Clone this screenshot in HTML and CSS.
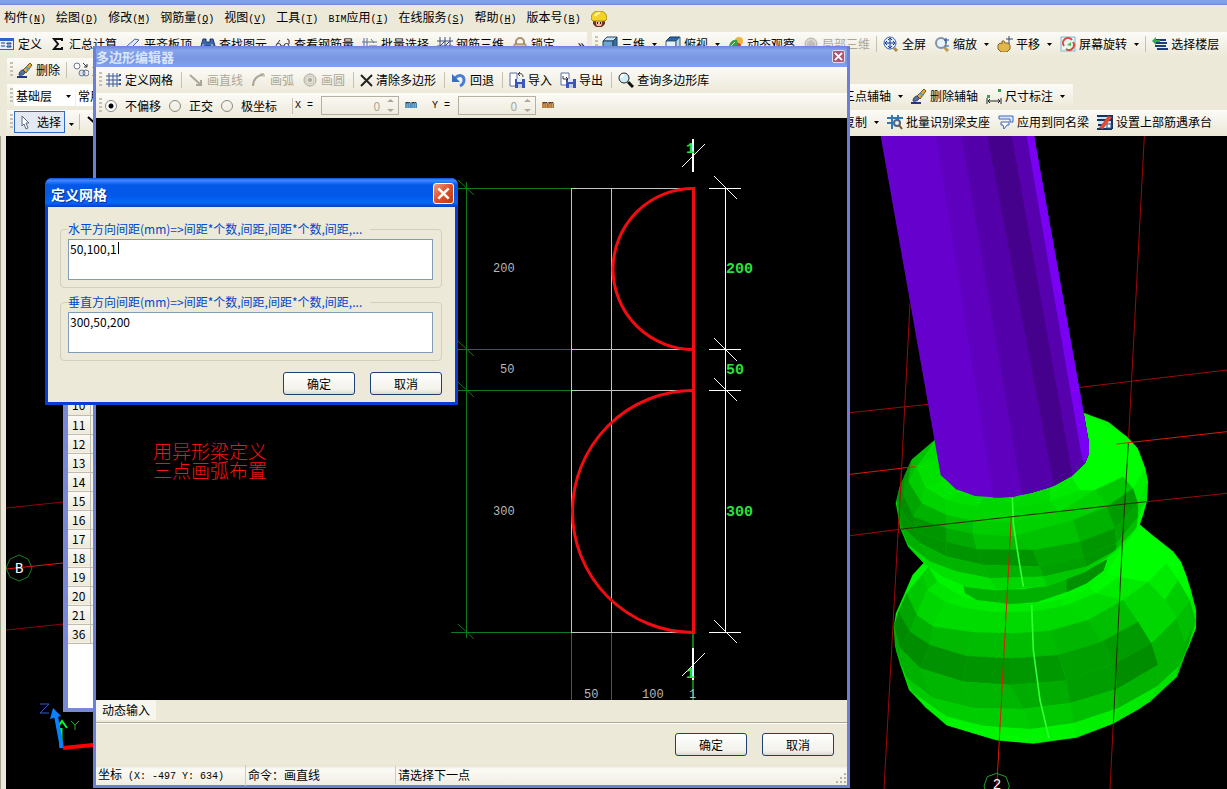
FILE: index.html
```html
<!DOCTYPE html>
<html lang="zh-CN">
<head>
  <meta charset="UTF-8" />
  <meta name="viewport" content="width=device-width, initial-scale=1.0"/>
  <title>多边形编辑器</title>
  <link rel="stylesheet" href="styles.css">
</head>
<body>

  <!-- icon sprite -->
  <svg class="sprite" aria-hidden="true">
    <symbol id="i-define" viewBox="0 0 16 16"><rect x="0" y="2" width="15" height="12" fill="#2f62c8"/><rect x="1" y="5" width="13" height="8" fill="#e8f0ff"/><path d="M2 7h4M2 10h4M8 7h4v1h-4zM8 10h4v1h-4z" stroke="#1d3f90" fill="none"/></symbol>
    <symbol id="i-sigma" viewBox="0 0 16 16"><path d="M12 5V3H4l4 5-4 5h8v-2" fill="none" stroke="#111" stroke-width="2"/></symbol>
    <symbol id="i-plane" viewBox="0 0 16 16"><path d="M1 11 10 3l4 1-8 8z" fill="#dfe8f4" stroke="#46659a"/><path d="M2 14h11" stroke="#888"/></symbol>
    <symbol id="i-binoc" viewBox="0 0 16 16"><path d="M3 3h3v3h4V3h3l2 7v4h-5v-4H6v4H1v-4z" fill="#3c68b0" stroke="#1b3768"/><path d="M3 8v3M12 8v3" stroke="#cfe0ff"/></symbol>
    <symbol id="i-glasses" viewBox="0 0 16 16"><path d="M1 10a2 2 0 1 0 5 0 2 2 0 1 0-5 0M9 10a2 2 0 1 0 5 0 2 2 0 1 0-5 0M6 10h3M2 8 5 4M14 8V4l-2-1" fill="none" stroke="#333"/></symbol>
    <symbol id="i-batch" viewBox="0 0 16 16"><path d="M2 2v12M5 2v12M0 6h15M7 10h8M9 3l3 4" fill="none" stroke="#5d6f94"/></symbol>
    <symbol id="i-rebar" viewBox="0 0 16 16"><path d="M3 1v14M8 1v14M13 1v14M0 5h16M0 10h16M3 10 8 5M8 10l5-5" fill="none" stroke="#3e4f80"/></symbol>
    <symbol id="i-lock" viewBox="0 0 16 16"><path d="M4 8V6a4 4 0 0 1 8 0v2" fill="none" stroke="#a89468" stroke-width="2"/><rect x="2" y="8" width="12" height="7" rx="1" fill="#d8c48c" stroke="#8d7b50"/></symbol>
    <symbol id="i-cube" viewBox="0 0 16 16"><path d="M1 5 5 1h10l-4 4z" fill="#cbe2f5" stroke="#1e4468"/><path d="M1 5h10v10H1z" fill="#6fa3d0" stroke="#1e4468"/><path d="m11 5 4-4v10l-4 4z" fill="#3a6d9f" stroke="#1e4468"/></symbol>
    <symbol id="i-cubetop" viewBox="0 0 16 16"><path d="M1 5 5 1h10l-4 4z" fill="#2867ae" stroke="#16365c"/><path d="M1 5h10v10H1z" fill="#e4f0fa" stroke="#3a5f86"/><path d="m11 5 4-4v10l-4 4z" fill="#bcd6ea" stroke="#3a5f86"/></symbol>
    <symbol id="i-orbit" viewBox="0 0 16 16"><circle cx="11" cy="5" r="4" fill="#f0b43a"/><circle cx="10" cy="10" r="3" fill="#cf3a2a"/><path d="M1 12c0-6 4-9 8-8l1 4c-2 4-5 6-9 4z" fill="#2fa244"/><path d="M3 10 7 6" stroke="#bff0bf"/></symbol>
    <symbol id="i-partial" viewBox="0 0 16 16"><circle cx="8" cy="8" r="6" fill="#d9d7cc" stroke="#b4b2a5"/><path d="m4 7 4-3 4 3v4l-4 2-4-2z" fill="#c1bfb4"/></symbol>
    <symbol id="i-full" viewBox="0 0 16 16"><path d="m11 12 3 3" stroke="#b08a40" stroke-width="3"/><circle cx="7" cy="7" r="6" fill="#dfeaff" stroke="#3a5eae"/><path d="M7 2v10M2 7h10M5 4l2-2 2 2M5 10l2 2 2-2M4 5 2 7l2 2M10 5l2 2-2 2" fill="none" stroke="#1c3c88"/></symbol>
    <symbol id="i-zoom" viewBox="0 0 16 16"><path d="m10 11 4 4" stroke="#c09a50" stroke-width="3"/><circle cx="7" cy="7" r="5" fill="#e9f3fc" stroke="#8292a8" stroke-width="2"/><path d="M10 4h5M12 2v5M11 10h4" stroke="#24509c"/></symbol>
    <symbol id="i-hand" viewBox="0 0 16 16"><path d="M1 9 3 7l2 1V5h2l1 2h3l2 2v4l-3 3H4l-3-3z" fill="#e3b64c" stroke="#8a6520"/><path d="M12 0v8M9 3h7" stroke="#39466c"/></symbol>
    <symbol id="i-rotate" viewBox="0 0 16 16"><rect x="1" y="1" width="14" height="14" fill="#e4f6f0" stroke="#7fb9d8"/><path d="M4 10a5 5 0 0 1 8-6M13 6a5 5 0 0 1-7 7" fill="none" stroke="#e0453a" stroke-width="2"/><path d="m7 9 4-3v4z" fill="#58b858"/></symbol>
    <symbol id="i-floors" viewBox="0 0 16 16"><path d="M3 4h11M4 7h11M3 10h11M5 13h11" stroke="#1e3f76" stroke-width="2"/><path d="M0 5 4 1v3h4v2H4v3z" fill="#38a848"/></symbol>
    <symbol id="i-brush" viewBox="0 0 16 16"><path d="M0 15h10" stroke="#23387c" stroke-width="2"/><path d="m6 8 7-7 2 2-6 8z" fill="#e0a63a" stroke="#7a5420"/><path d="m9 5 3 3" stroke="#4aa0c8" stroke-width="2"/><path d="M2 13c0-3 2-5 4-5l2 2c0 2-3 4-6 3z" fill="#5a6ea8" stroke="#2b3c70"/></symbol>
    <symbol id="i-shapes" viewBox="0 0 16 16"><circle cx="4" cy="4" r="3" fill="#fff" stroke="#6a7a98"/><circle cx="9" cy="11" r="3" fill="#dce4f0" stroke="#6a7a98"/><circle cx="13" cy="11" r="3" fill="none" stroke="#6a7a98"/><path d="m10 1 4 4M14 2v3h-3" fill="none" stroke="#333"/></symbol>
    <symbol id="i-cursor" viewBox="0 0 16 16"><path d="m4 2 7 7H8l2 5-2 1-2-5-2 2z" fill="#fff" stroke="#5a6a88"/></symbol>
    <symbol id="i-line" viewBox="0 0 16 16"><path d="m2 3 11 10M13 8v5H8" fill="none" stroke="currentColor" stroke-width="2"/></symbol>
    <symbol id="i-axis" viewBox="0 0 16 16"><path d="M2 13h12M2 3v10M3 12l9-9" fill="none" stroke="#444"/></symbol>
    <symbol id="i-dim" viewBox="0 0 16 16"><path d="M1 10v6M15 10v6M2 13h12M4 11l-2 2 2 2M12 11l2 2-2 2" fill="none" stroke="#222"/><path d="M1 7h3v3H1zM12 1h3v3h-3z" fill="#3f9a58"/></symbol>
    <symbol id="i-recog" viewBox="0 0 16 16"><path d="M0 4h16M0 9h6M5 1v14M11 1v5" fill="none" stroke="#2f78b8" stroke-width="2"/><circle cx="10" cy="9" r="3" fill="#e4f0fa" stroke="#54657c" stroke-width="2"/><path d="m12 11 3 4" stroke="#8a4a2a" stroke-width="2"/></symbol>
    <symbol id="i-apply" viewBox="0 0 16 16"><path d="M1 2h14v6h-3V5H1z" fill="#dfe9ff" stroke="#3a66b8"/><path d="M3 8h8v3H9l-3 4-1-4H3z" fill="#fff" stroke="#3a66b8"/></symbol>
    <symbol id="i-setbar" viewBox="0 0 16 16"><path d="M1 1h14v14H1z" fill="#cfe2fa"/><path d="M0 2h15M0 6h14M1 11h5M0 15h15M15 1v14" stroke="#16355e" stroke-width="2"/><path d="m2 14 9-12 4 1-9 12z" fill="#e04a34"/><path d="M10 10h4v4h-4z" fill="#fff" stroke="#2a5a9a"/></symbol>
    <symbol id="i-grid" viewBox="0 0 16 16"><path d="M3 1v14M7 1v14M11 1v14M0 4h14M0 8h14M0 12h14" stroke="#3858a0"/><path d="M13 2h2v2h-2zM13 7h2v2h-2zM13 11h2v2h-2z" fill="#3858a0"/></symbol>
    <symbol id="i-arc" viewBox="0 0 16 16"><path d="M2 14C2 8 6 3 13 2M9 2h4v3" fill="none" stroke="currentColor" stroke-width="1"/><path d="M2 14C2 8 6 3 12 3" fill="none" stroke="currentColor" stroke-width="2"/></symbol>
    <symbol id="i-circle" viewBox="0 0 16 16"><circle cx="8" cy="8" r="6" fill="#e4e2d8" stroke="currentColor"/><circle cx="8" cy="8" r="4" fill="none" stroke="#cfccbf"/><circle cx="8" cy="8" r="2" fill="currentColor"/></symbol>
    <symbol id="i-cross" viewBox="0 0 13 16"><path d="m1 3 11 11M12 3 1 14" stroke="#222" stroke-width="2"/></symbol>
    <symbol id="i-undo" viewBox="0 0 16 16"><path d="M4 6c4-4 9-3 9 2 0 3-2 5-4 6" fill="none" stroke="#4a7fd4" stroke-width="3"/><path d="M1 2v8h8z" fill="#3a6cc4"/></symbol>
    <symbol id="i-import" viewBox="0 0 16 16"><path d="M1 1h7v13H1z" fill="#fff" stroke="#5a6fa0"/><path d="M6 7h10v9H6z" fill="#3c56b8"/><path d="M8 7h5v3H8z" fill="#dfe8ff"/><path d="M9 12h4v4H9z" fill="#c8cede"/><path d="M14 5c0-3-2-4-5-3m2-2L9 2l2 2" fill="none" stroke="#333"/></symbol>
    <symbol id="i-export" viewBox="0 0 16 16"><path d="M1 1h8v12H1z" fill="#fff" stroke="#5a6fa0"/><path d="M6 7h10v9H6z" fill="#3c56b8"/><path d="M8 7h5v3H8z" fill="#dfe8ff"/><path d="M9 12h4v4H9z" fill="#c8cede"/><path d="M3 4v3h4M6 5l2 2-2 2" fill="none" stroke="#333"/></symbol>
    <symbol id="i-search" viewBox="0 0 16 16"><path d="m10 10 5 5" stroke="#111" stroke-width="3"/><circle cx="6" cy="6" r="5" fill="#cfeefa" stroke="#222"/><path d="M3 6c0-2 1-3 3-3" fill="none" stroke="#fff" stroke-width="2"/></symbol>
    <symbol id="i-helmet" viewBox="0 0 16 16"><path d="M2 8h12v5l-3 3H5l-3-3z" fill="#6a3428"/><path d="M5 10h6v3l-1 2H6l-1-2z" fill="#f2b99a"/><path d="M6 11h1v2H6zM9 11h1v2H9z" fill="#222"/><path d="M0 8c0-5 3-8 8-8s8 3 8 8l-2 2H2z" fill="#f2d428" stroke="#a88a10"/><path d="M4 5c1-2 3-3 5-3" fill="none" stroke="#fff8a0" stroke-width="2"/></symbol>
    <symbol id="i-down" viewBox="0 0 5 5"><path d="M0 1h5L2.500 4z" fill="currentColor"/></symbol>
    <symbol id="i-close" viewBox="0 0 10 10"><path d="m1 1 8 8M9 1 1 9" stroke="#fff" stroke-width="2"/></symbol>
  </svg>

  <div class="app">
    <div class="app-title"></div>
    <nav class="menubar">
      <button>构件<span class="latin">(<u>N</u>)</span></button>
      <button>绘图<span class="latin">(<u>D</u>)</span></button>
      <button>修改<span class="latin">(<u>M</u>)</span></button>
      <button>钢筋量<span class="latin">(<u>Q</u>)</span></button>
      <button>视图<span class="latin">(<u>V</u>)</span></button>
      <button>工具<span class="latin">(<u>T</u>)</span></button>
      <button><span class="latin">BIM</span>应用<span class="latin">(<u>I</u>)</span></button>
      <button>在线服务<span class="latin">(<u>S</u>)</span></button>
      <button>帮助<span class="latin">(<u>H</u>)</span></button>
      <button>版本号<span class="latin">(<u>B</u>)</span></button>
      <svg class="icon"><use href="#i-helmet"/></svg>
    </nav>

    <div class="bar-row row-main">
      <div class="bar bar-first">
        <button class="tool"><svg class="icon"><use href="#i-define"/></svg>定义</button>
        <button class="tool"><svg class="icon"><use href="#i-sigma"/></svg>汇总计算</button>
        <button class="tool"><svg class="icon"><use href="#i-plane"/></svg>平齐板顶</button>
        <button class="tool"><svg class="icon"><use href="#i-binoc"/></svg>查找图元</button>
        <button class="tool"><svg class="icon"><use href="#i-glasses"/></svg>查看钢筋量</button>
        <button class="tool"><svg class="icon"><use href="#i-batch"/></svg>批量选择</button>
        <button class="tool"><svg class="icon"><use href="#i-rebar"/></svg>钢筋三维</button>
        <button class="tool"><svg class="icon"><use href="#i-lock"/></svg>锁定</button>
        <button class="more">»</button>
      </div>
      <div class="bar bar-grow">
        <i class="grip"></i>
        <button class="tool"><svg class="icon"><use href="#i-cube"/></svg>三维<svg class="down"><use href="#i-down"/></svg></button>
        <button class="tool"><svg class="icon"><use href="#i-cubetop"/></svg>俯视<svg class="down"><use href="#i-down"/></svg></button>
        <button class="tool"><svg class="icon"><use href="#i-orbit"/></svg>动态观察</button>
        <button class="tool" disabled><svg class="icon"><use href="#i-partial"/></svg>局部三维</button>
        <i class="sep"></i>
        <button class="tool"><svg class="icon"><use href="#i-full"/></svg>全屏</button>
        <button class="tool"><svg class="icon"><use href="#i-zoom"/></svg>缩放<svg class="down"><use href="#i-down"/></svg></button>
        <button class="tool"><svg class="icon"><use href="#i-hand"/></svg>平移<svg class="down"><use href="#i-down"/></svg></button>
        <button class="tool"><svg class="icon"><use href="#i-rotate"/></svg>屏幕旋转<svg class="down"><use href="#i-down"/></svg></button>
        <i class="sep"></i>
        <button class="tool"><svg class="icon"><use href="#i-floors"/></svg>选择楼层</button>
      </div>
    </div>

    <div class="bar-row">
      <div class="bar">
        <i class="grip"></i>
        <button class="tool"><svg class="icon"><use href="#i-brush"/></svg>删除</button>
        <i class="sep"></i>
        <button class="tool"><svg class="icon"><use href="#i-shapes"/></svg>复制</button>
      </div>
    </div>

    <div class="bar-row row-split">
      <div class="bar">
        <i class="grip"></i>
        <div class="combo"><select aria-label="楼层"><option>基础层</option></select><svg class="down"><use href="#i-down"/></svg></div>
        <div class="combo"><select aria-label="构件类型"><option>常用构件</option></select><svg class="down"><use href="#i-down"/></svg></div>
      </div>
      <div class="bar bar-axis">
        <button class="tool"><svg class="icon"><use href="#i-axis"/></svg>三点辅轴<svg class="down"><use href="#i-down"/></svg></button>
        <button class="tool"><svg class="icon"><use href="#i-brush"/></svg>删除辅轴</button>
        <button class="tool"><svg class="icon"><use href="#i-dim"/></svg>尺寸标注<svg class="down"><use href="#i-down"/></svg></button>
      </div>
    </div>

    <div class="bar-row row-split">
      <div class="bar">
        <i class="grip"></i>
        <button class="tool active"><svg class="icon"><use href="#i-cursor"/></svg>选择</button>
        <button class="pick" aria-label="更多选择"><svg class="down"><use href="#i-down"/></svg></button>
        <i class="sep"></i>
        <button class="tool"><svg class="icon"><use href="#i-line"/></svg>直线</button>
      </div>
      <div class="bar">
        <button class="tool"><svg class="icon"><use href="#i-shapes"/></svg>复制<svg class="down"><use href="#i-down"/></svg></button>
        <button class="tool"><svg class="icon"><use href="#i-recog"/></svg>批量识别梁支座</button>
        <button class="tool"><svg class="icon"><use href="#i-apply"/></svg>应用到同名梁</button>
        <button class="tool"><svg class="icon"><use href="#i-setbar"/></svg>设置上部筋遇承台</button>
      </div>
    </div>

    <div class="scene">
      <svg viewBox="6 136 1221 653" preserveAspectRatio="xMinYMin slice">
        <path d="M6 508 63 502M6 630l57-6" class="axis-dim"/>
        <path d="m6 569 57-6" class="axis-hot"/>
        <path d="m19 555 9 4 4 9-4 9-9 4-9-4-4-9 4-9z" class="bubble"/>
        <text x="15" y="573" class="bubble-text">B</text>
        <path d="M61 748V728" stroke="#00ff20" stroke-width="3"/>
        <path d="m57 728 5-7 5 7" fill="none" stroke="#00ff20" stroke-width="2"/>
        <path d="m62 748-6-32" stroke="#0a80ff" stroke-width="4"/>
        <path d="m50 719 3-11 8 8z" fill="#0a80ff"/>
        <path d="m63 748 40-4" stroke="#ff0000" stroke-width="4"/>
        <path d="M40 704h9l-9 9h9" fill="none" stroke="#2a5fc0"/>
        <path d="m71 721 4 4 4-4M75 725v5" fill="none" stroke="#20b030"/>

        <!-- model view, three units to a pixel -->
        <svg x="850" y="136" width="377" height="653" viewBox="0 -792 1131 1959">
          <g class="grid-dim">
            <path d="M0 38 235 13M690-38l441-52M0 407l148-19M890 305l241-25M180-290 155 200 102 1167M883-792 835 130M790 970l-10 197"/>
          </g>
          <g id="base"></g>
          <path d="M340 555 440 568 520 568 600 553 705 513 772 478 760 512 710 550 640 580 560 607 480 612 380 600 345 580z" fill="#00b000"/>
          <path d="M650 535 705 513 772 478 760 512 710 550 650 577z" fill="#009000"/>
          <g id="ring"></g>
          <path d="M92-792H552L717 130v30l-12 30-40 38-60 32-60 18-55 12-40 3-75-5-57-20-33-31-13-12z" fill="#6600cc"/>
          <path d="M258-792h294L717 130v30l-12 30-40 38-60 32-60 18-55 12-60 3z" fill="#5e00be"/>
          <path d="M335-792h217L717 130v30l-12 30-40 38-60 32-60 18-30 6z" fill="#5400aa"/>
          <path d="M412-792h140L717 130v30l-12 30-40 38-53 30z" fill="#45008c"/>
          <path d="M485-792h67L717 130v30l-12 30-38 36z" fill="#5600ae"/>
          <path d="M530-792h22L717 130v30l-15 32-10-40z" fill="#7a00f4"/>
          <path d="m487 293 3 77 15 100 15 90M545 615l5 135 20 150 27 115" fill="none" stroke="#30ff30" stroke-width="5"/>
          <path d="m0 223 195-23M800 132l331-37" class="grid-hot"/>
          <path d="m148 388 742-83M835 130 817 430 790 970" class="grid-over"/>
          <path d="M155 200 145 400" class="grid-line"/>
          <path d="m484 350-44 817" class="grid-hot"/>
          <path d="m440 1120 28 10 10 28-10 28h-56l-10-28 10-28z" fill="none" stroke="#20a030" stroke-width="3"/>
          <text x="428" y="1166" class="model-text">2</text>
        </svg>
      </svg>
    </div>
  </div>

  <section class="window sheet">
    <div class="sheet-title"></div>
    <div class="sheet-body">
      <table>
        <tbody>
          <tr><th>10</th><td></td></tr>
          <tr><th>11</th><td></td></tr>
          <tr><th>12</th><td></td></tr>
          <tr><th>13</th><td></td></tr>
          <tr><th>14</th><td></td></tr>
          <tr><th>15</th><td></td></tr>
          <tr><th>16</th><td></td></tr>
          <tr><th>17</th><td></td></tr>
          <tr><th>18</th><td></td></tr>
          <tr><th>19</th><td></td></tr>
          <tr><th>20</th><td></td></tr>
          <tr><th>21</th><td></td></tr>
          <tr><th>36</th><td></td></tr>
        </tbody>
      </table>
    </div>
  </section>

  <section class="window editor">
    <header class="editor-title">
      <h2>多边形编辑器</h2>
      <button class="close-small" aria-label="关闭"><svg><use href="#i-close"/></svg></button>
    </header>
    <div class="bar editor-tools">
      <i class="grip"></i>
      <button class="tool"><svg class="icon"><use href="#i-grid"/></svg>定义网格</button>
      <i class="sep"></i>
      <button class="tool" disabled><svg class="icon"><use href="#i-line"/></svg>画直线</button>
      <button class="tool" disabled><svg class="icon"><use href="#i-arc"/></svg>画弧</button>
      <button class="tool" disabled><svg class="icon"><use href="#i-circle"/></svg>画圆</button>
      <i class="sep"></i>
      <button class="tool"><svg class="icon narrow"><use href="#i-cross"/></svg>清除多边形</button>
      <i class="sep"></i>
      <button class="tool"><svg class="icon"><use href="#i-undo"/></svg>回退</button>
      <i class="sep"></i>
      <button class="tool"><svg class="icon"><use href="#i-import"/></svg>导入</button>
      <button class="tool"><svg class="icon"><use href="#i-export"/></svg>导出</button>
      <i class="sep"></i>
      <button class="tool"><svg class="icon"><use href="#i-search"/></svg>查询多边形库</button>
    </div>
    <div class="bar editor-options">
      <i class="grip"></i>
      <label class="radio"><input type="radio" name="offset" checked>不偏移</label>
      <label class="radio"><input type="radio" name="offset">正交</label>
      <label class="radio"><input type="radio" name="offset">极坐标</label>
      <i class="sep"></i>
      <label class="coord latin" for="off-x">X =</label>
      <div class="spin"><input id="off-x" type="text" value="0" disabled><svg viewBox="0 0 7 15"><path d="M0 4h7L3.500 1zM0 11h7l-3.500 3z" fill="#aca899"/></svg></div>
      <span class="unit latin">mm</span>
      <label class="coord latin" for="off-y">Y =</label>
      <div class="spin"><input id="off-y" type="text" value="0" disabled><svg viewBox="0 0 7 15"><path d="M0 4h7L3.500 1zM0 11h7l-3.500 3z" fill="#aca899"/></svg></div>
      <span class="unit latin">mm</span>
    </div>

    <div class="drawing">
      <svg viewBox="96 118 752 582" preserveAspectRatio="xMinYMin slice">
        <g class="dim-green">
          <path d="M466.500 182V638M451 188.500H571M451 349.500H571M451 390.500H571M451 632.500H571M571.500 632v68M611.500 632v68"/>
          <path d="m458 180 16 15M458 341l16 15M458 382l16 15M458 624l16 15"/>
          <path d="M693 632v68" stroke-width="2"/>
        </g>
        <path d="M571.500 188V632M611.500 188V632M571 188.500H693M571 349.500H693M571 390.500H693M571 632.500H693" class="grid-white"/>
        <path d="M725.500 188V632M709 188.500h32M709 349.500h32M709 390.500h32M709 632.500h32M714 176l23 23M714 338l23 23M714 378l23 23M714 620l23 23" class="dim-white"/>
        <path d="M693.500 188.500A80 80 0 0 0 693.500 349.500M693.500 390.500A121 121 0 0 0 693.500 632.500" class="shape"/>
        <path d="M693.500 187V634" class="shape"/>
        <path d="M693 139v33M693 648v32" stroke="#fff" stroke-width="2"/>
        <path d="m682 167 23-23M682 676l23-23" class="dim-white"/>
        <text x="686" y="153" class="size">1</text>
        <text x="686" y="678" class="size">1</text>
        <text x="726" y="273" class="size">200</text>
        <text x="726" y="374" class="size">50</text>
        <text x="726" y="516" class="size">300</text>
        <text x="493" y="272" class="step">200</text>
        <text x="500" y="373" class="step">50</text>
        <text x="493" y="515" class="step">300</text>
        <text x="584" y="698" class="step">50</text>
        <text x="642" y="698" class="step">100</text>
        <text x="689" y="698" class="step">1</text>
        <text x="153" y="459" class="note">用异形梁定义</text>
        <text x="153" y="478" class="note">三点画弧布置</text>
      </svg>
    </div>

    <div class="tabs"><button>动态输入</button></div>
    <div class="actions editor-actions">
      <button class="btn">确定</button>
      <button class="btn">取消</button>
    </div>
    <footer class="status">
      <div>坐标<span class="latin"> (X: -497 Y: 634)</span></div>
      <div>命令：画直线</div>
      <div>请选择下一点</div>
      <svg class="resize" viewBox="0 0 12 12"><path d="M9 0h2v2H9zM9 4h2v2H9zM9 8h2v2H9zM5 4h2v2H5zM5 8h2v2H5zM1 8h2v2H1z" fill="#b8b4a2"/></svg>
    </footer>
  </section>

  <section class="window dialog">
    <header class="dialog-title">
      <h2>定义网格</h2>
      <button class="close" aria-label="关闭"><svg><use href="#i-close"/></svg></button>
    </header>
    <form class="dialog-body">
      <fieldset>
        <legend><label for="horizontal">水平方向间距(mm)=&gt;间距*个数,间距,间距*个数,间距,...</label></legend>
        <textarea id="horizontal">50,100,1</textarea>
        <i class="caret"></i>
      </fieldset>
      <fieldset>
        <legend><label for="vertical">垂直方向间距(mm)=&gt;间距*个数,间距,间距*个数,间距,...</label></legend>
        <textarea id="vertical">300,50,200</textarea>
      </fieldset>
      <div class="actions">
        <button type="button" class="btn">确定</button>
        <button type="button" class="btn">取消</button>
      </div>
    </form>
  </section>

  <script src="model.js"></script>
</body>
</html>
```
FILE: styles.css
```css
* {
  box-sizing: border-box;
}
body {
  margin: 0;
  font-family: "Noto Sans CJK SC", sans-serif;
  font-size: 12px;
  line-height: 18px;
  color: #000;
  background: #ece9d8;
  overflow: hidden;
}
button, input, select, textarea {
  font: inherit;
  color: inherit;
  margin: 0;
}
button {
  padding: 0;
  border: 0;
  background: none;
  white-space: nowrap;
}
h2 {
  margin: 0;
}
.sprite {
  display: none;
}
.icon {
  width: 16px;
  height: 16px;
  flex: none;
}
.narrow {
  width: 13px;
}
.down {
  width: 5px;
  height: 5px;
  flex: none;
  margin-left: 4px;
}
.latin {
  font-family: "Liberation Mono", monospace;
  font-size: 10px;
  white-space: pre;
}

/* main window */
.app {
  display: flex;
  flex-direction: column;
  height: 100vh;
}
.app-title {
  height: 5px;
  background: linear-gradient(#7fa3ea 60%, #6f86d8);
}
.menubar {
  display: flex;
  align-items: center;
  gap: 10px;
  height: 27px;
  padding-left: 4px;
}
.bar-row {
  display: flex;
  height: 26px;
  padding-left: 7px;
}
.row-main {
  padding: 0;
}
.row-split {
  display: grid;
  grid-template-columns: 813px 1fr;
}
.bar {
  display: flex;
  align-items: center;
  height: 24px;
  min-width: 0;
  background: linear-gradient(#fcfbf7, #ece9d8);
}
.bar-first {
  width: 592px;
  flex: none;
  margin-left: -5px;
}
.bar-grow {
  flex: 1;
  margin-left: 5px;
}
.bar-axis {
  justify-self: start;
  padding-right: 4px;
}
.tool {
  display: flex;
  align-items: center;
  gap: 3px;
  height: 22px;
  padding: 0 4px;
  flex: none;
}
.tool:disabled {
  color: #aca899;
}
.tool.active {
  margin-left: 1px;
  padding: 0 3px;
  border: 1px solid #316ac5;
  background: #e3e8f2;
}
.pick {
  width: 12px;
}
.pick .down {
  margin: 0;
}
.more {
  margin-left: 18px;
  font-size: 16px;
}
.grip {
  width: 3px;
  height: 16px;
  margin-left: 3px;
  flex: none;
  background: repeating-linear-gradient(#c4c1b2 0 2px, transparent 2px 4px);
}
.sep {
  width: 1px;
  height: 16px;
  margin: 0 2px;
  flex: none;
  background: #c5c2b2;
}
.combo {
  display: flex;
  align-items: center;
  height: 20px;
  margin-left: 1px;
  padding-right: 4px;
  background: #fff;
}
.combo select {
  appearance: none;
  width: 48px;
  padding: 0 2px;
  border: 0;
  background: #fff;
}
.scene {
  flex: 1;
  min-height: 0;
  margin-left: 1px;
  border-left: 5px solid #ece9d8;
  box-shadow: -1px 0 #a5a294;
  background: #000;
}
.scene > svg, .drawing > svg {
  display: block;
  width: 100%;
  height: 100%;
}
.axis-dim {
  stroke: #900010;
}
.axis-hot {
  stroke: #f01010;
}
.bubble {
  fill: none;
  stroke: #148020;
}
.bubble-text, .model-text {
  font-family: "Liberation Mono", monospace;
  font-size: 14px;
  fill: #fff;
}
.model-text {
  font-size: 42px;
}
.grid-dim, .grid-line {
  fill: none;
  stroke: #a00808;
  stroke-width: 3;
}
.grid-hot {
  fill: none;
  stroke: #e01808;
  stroke-width: 3;
}
.grid-over {
  fill: none;
  stroke: #302800;
  stroke-width: 3;
}

/* floating windows */
.window {
  position: absolute;
  display: flex;
  flex-direction: column;
}
.sheet {
  left: 63px;
  top: 371px;
  width: 400px;
  height: 341px;
  border: 4px solid #7888d4;
  border-left-width: 5px;
  border-top: 0;
}
.sheet-title {
  height: 25px;
  background: #7b96e4;
}
.sheet-body {
  flex: 1;
  background: #fff;
}
.sheet table {
  border-collapse: collapse;
  width: 100%;
}
.sheet th, .sheet td {
  height: 19px;
  padding: 0;
  border-bottom: 1px solid #c0bdae;
  line-height: 18px;
  background: #f4f3ec;
}
.sheet th {
  width: 22px;
  border-right: 1px solid #c0bdae;
  font-weight: normal;
  background: linear-gradient(#fbfaf6, #ece9d8);
}
.editor {
  left: 93px;
  top: 46px;
  width: 757px;
  height: 742px;
  border: 3px solid #6b7fd6;
  border-top: 0;
  background: #ece9d8;
}
.editor-title {
  display: flex;
  align-items: center;
  justify-content: space-between;
  height: 21px;
  padding-right: 2px;
  background: linear-gradient(#6c84d8, #86a4ec 20%, #7896e2 60%, #82a2ec);
}
.editor-title h2 {
  font-size: 13px;
  color: #dbe6fa;
}
.close-small {
  width: 13px;
  height: 13px;
  border: 1px solid #e4dcec;
  border-radius: 2px;
  background: #a85878;
}
.close-small svg, .close svg {
  display: block;
  width: 9px;
  height: 9px;
  margin: 1px;
}
.editor .bar {
  flex: none;
  height: 26px;
}
.editor-tools .sep {
  margin: 0 2px 0 4px;
}
.editor .editor-options {
  height: 25px;
}
.radio {
  display: flex;
  align-items: center;
  gap: 8px;
  padding: 0 5px 0 3px;
}
.radio input {
  appearance: none;
  width: 12px;
  height: 12px;
  border: 1px solid #8a897c;
  border-radius: 50%;
}
.radio input:checked {
  background: radial-gradient(#000 0 2px, #fff 3px);
}
.editor-options .sep {
  margin: 0 2px 0 10px;
}
.coord {
  width: 26px;
}
.unit {
  width: 27px;
  margin-left: 6px;
}
.spin {
  display: flex;
  align-items: center;
  width: 78px;
  height: 19px;
  padding-right: 4px;
  border: 1px solid #b4b1a2;
}
.spin input {
  width: 62px;
  padding: 0 4px;
  border: 0;
  background: none;
  text-align: right;
  color: #aca899;
}
.spin svg {
  width: 7px;
  height: 15px;
  margin-left: auto;
}
.drawing {
  flex: 1;
  min-height: 0;
  background: #000;
}
.dim-green {
  fill: none;
  stroke: #0e7a1c;
}
.grid-white {
  fill: none;
  stroke: #c4c4c4;
}
.dim-white {
  fill: none;
  stroke: #fff;
}
.shape {
  fill: none;
  stroke: #f00c10;
  stroke-width: 3;
}
.size {
  font-family: "Liberation Mono", monospace;
  font-size: 15px;
  font-weight: bold;
  fill: #2ae03a;
}
.step {
  font-family: "Liberation Mono", monospace;
  font-size: 12px;
  fill: #b8b8b8;
}
.note {
  font-size: 19px;
  font-weight: 300;
  fill: #f01414;
}
.tabs {
  display: flex;
  height: 23px;
  border-bottom: 1px solid #aca899;
}
.tabs button {
  height: 20px;
  padding: 0 6px;
  background: #f6f5ee;
}
.actions {
  display: flex;
  justify-content: flex-end;
  gap: 15px;
}
.editor-actions {
  height: 42px;
  padding: 9px 13px;
  border-top: 1px solid #fff;
}
.btn {
  width: 72px;
  height: 23px;
  border: 1px solid #1c3f74;
  border-radius: 3px;
  line-height: 16px;
  background: linear-gradient(#fff, #f2f1ea 80%, #dcd8cc);
}
.status {
  display: flex;
  align-items: center;
  height: 20px;
  background: linear-gradient(#e4e1d0, #fbfaf5 20%, #f0eee2);
}
.status div {
  width: 150px;
  padding-left: 2px;
  border-right: 1px solid #d0cdbe;
  white-space: nowrap;
}
.status div:nth-child(3) {
  border: 0;
}
.resize {
  width: 12px;
  height: 12px;
  margin-left: auto;
  align-self: flex-end;
}

/* grid dialog */
.dialog {
  left: 45px;
  top: 178px;
  width: 413px;
  border: 3px solid #0a3cd8;
  border-top: 0;
  border-radius: 7px 7px 0 0;
  background: #ece9d8;
}
.dialog-title {
  display: flex;
  align-items: center;
  justify-content: space-between;
  height: 29px;
  margin: 0 -3px;
  padding: 2px 4px 0 6px;
  border-radius: 7px 7px 0 0;
  background: linear-gradient(#0b4fd8, #3a8cff 8%, #0458e8 24%, #0258ea 60%, #0466fc 85%, #0340c0);
}
.dialog-title h2 {
  font-size: 14px;
  color: #fff;
  text-shadow: 1px 1px #0a2f90;
}
.close {
  width: 21px;
  height: 21px;
  border: 1px solid #fff;
  border-radius: 3px;
  background: linear-gradient(135deg, #f09a80, #dd4f28 50%, #c03810);
}
.close svg {
  width: 13px;
  height: 13px;
  margin: 3px;
}
.dialog-body {
  padding: 13px 13px 7px 12px;
}
.dialog fieldset {
  position: relative;
  margin: 0 0 5px;
  padding: 1px 8px 7px 7px;
  border: 1px solid #d0d0bf;
  border-radius: 4px;
}
.dialog legend {
  padding: 0 8px 0 0;
  color: #0046c8;
  white-space: nowrap;
}
.dialog textarea {
  display: block;
  width: 100%;
  height: 41px;
  padding: 0 1px;
  border: 1px solid #7f9db9;
  background: #fff;
  resize: none;
}
.caret {
  position: absolute;
  left: 57px;
  top: 4px;
  width: 1px;
  height: 12px;
  background: #000;
}
.dialog .actions {
  margin-top: 11px;
}
```
FILE: model.js
```javascript
// each ring is a row of points, each number the green of the facet below it
const base = {
  rings: [
    [[235,500],[262,545],[335,590],[410,605],[480,612],[560,612],[640,598],[720,565],[765,525],[800,470],[870,375]],
    [[220,520],[232,570],[285,605],[350,625],[430,637],[550,635],[640,618],[740,580],[810,530],[860,480],[900,400]],
    [[170,580],[200,645],[250,680],[370,697],[490,700],[600,692],[715,660],[820,600],[895,545],[950,490],[970,455]],
    [[145,635],[180,695],[240,735],[350,768],[480,775],[625,765],[755,725],[865,665],[945,600],[985,540],[992,485]],
    [[132,680],[150,745],[210,805],[340,845],[480,855],[650,842],[795,790],[905,730],[980,655],[1020,600],[1022,570]],
    [[135,735],[165,830],[250,895],[370,925],[520,927],[660,910],[800,868],[925,795],[1005,725],[1037,660],[1037,630]],
    [[150,790],[190,880],[290,950],[400,978],[540,988],[670,970],[805,925],[920,860],[985,800],[1015,740],[1037,680]],
    [[178,870],[230,925],[290,975],[440,1020],[550,1030],[680,1012],[790,970],[900,905],[980,830],[1010,750],[1037,685]]
  ],
  greens: [
    [210,230,235,235,235,235,240,250,255,255],
    [200,215,220,220,218,218,220,235,255,255],
    [165,178,185,188,188,182,190,215,235,255],
    [138,142,146,148,152,160,155,215,205,250],
    [170,178,182,182,172,158,142,180,190,235],
    [195,202,205,205,200,190,180,180,175,220],
    [220,240,245,245,245,240,235,225,200,240]
  ],
  outline: [[220,490],[188,525],[160,590],[138,640],[132,680],[140,755],[178,870],[290,975],[440,1020],[550,1030],[680,1012],[790,970],[870,925],[980,830],[1010,750],[1037,685],[1037,630],[1010,530],[992,485],[870,375],[600,400]]
};

const ring = {
  rings: [
    [[258,130],[262,170],[285,240],[330,275],[400,292],[490,292],[600,262],[665,228],[717,150],[703,40]],
    [[255,120],[200,200],[225,262],[290,300],[380,320],[490,325],[600,305],[690,270],[780,220],[830,110]],
    [[185,180],[175,245],[215,310],[290,345],[370,362],[480,365],[630,335],[735,270],[820,230],[862,145]],
    [[165,225],[160,285],[190,350],[290,385],[370,402],[490,408],[670,360],[770,320],[850,265],[885,205]],
    [[150,260],[145,320],[200,395],[290,425],[380,448],[550,450],[690,425],[795,385],[865,310],[893,245]],
    [[140,300],[155,380],[210,430],[290,470],[400,495],[570,500],[700,468],[800,430],[865,350],[890,300]],
    [[150,380],[175,435],[240,485],[320,515],[420,535],[580,530],[710,500],[800,450],[860,385],[880,340]],
    [[175,440],[225,492],[280,530],[350,560],[440,570],[590,558],[705,515],[775,470],[817,430],[868,375]]
  ],
  greens: [
    [220,225,230,225,215,220,235,255,255],
    [190,205,212,215,215,215,225,255,255],
    [160,165,178,190,205,210,210,200,255],
    [145,142,150,170,190,195,178,155,240],
    [148,148,148,148,148,165,150,165,230],
    [165,175,180,180,178,160,150,190,250],
    [200,225,225,225,215,200,205,225,255]
  ],
  outline: [[255,120],[185,180],[150,260],[138,310],[152,385],[175,440],[225,492],[280,530],[350,560],[440,570],[590,558],[705,515],[775,470],[817,430],[868,375],[890,305],[893,245],[885,205],[862,145],[830,110],[775,66],[703,40]]
};

function addFace(group, points, green) {
  const face = document.createElementNS('http://www.w3.org/2000/svg', 'polygon');
  const color = 'rgb(0,' + green + ',0)';
  face.setAttribute('points', points.join(' '));
  face.setAttribute('fill', color);
  face.setAttribute('stroke', color);
  group.appendChild(face);
}

function drawMesh(id, mesh) {
  const group = document.getElementById(id);
  addFace(group, mesh.outline, 245);
  mesh.greens.forEach((row, i) => {
    row.forEach((green, j) => {
      const top = mesh.rings[i];
      const bottom = mesh.rings[i + 1];
      addFace(group, [top[j], top[j + 1], bottom[j + 1], bottom[j]], green);
    });
  });
}

drawMesh('base', base);
drawMesh('ring', ring);
```
